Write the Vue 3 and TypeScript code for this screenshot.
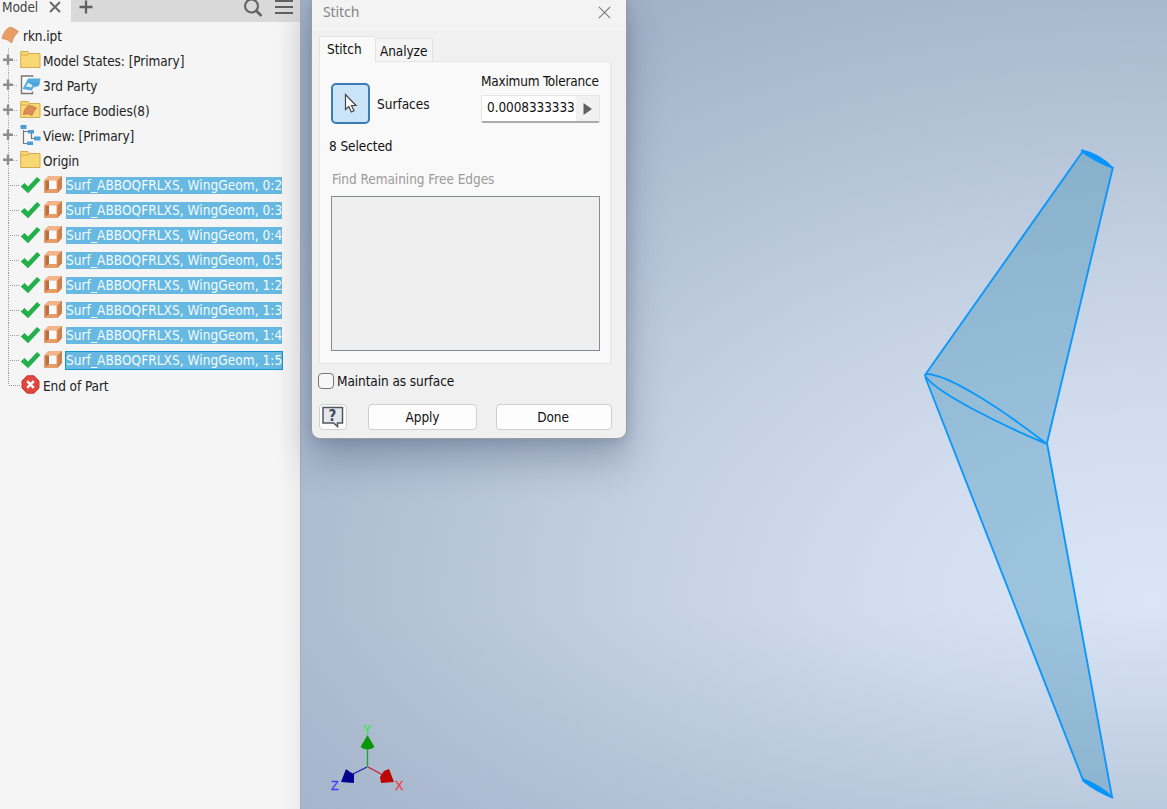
<script setup lang="ts">
interface TreeNode {
  label: string
  icon: 'folder' | 'party' | 'bodies' | 'view'
}

const nodes: TreeNode[] = [
  { label: 'Model States: [Primary]', icon: 'folder' },
  { label: '3rd Party', icon: 'party' },
  { label: 'Surface Bodies(8)', icon: 'bodies' },
  { label: 'View: [Primary]', icon: 'view' },
  { label: 'Origin', icon: 'folder' },
]

const surfaces: string[] = ['0:2', '0:3', '0:4', '0:5', '1:2', '1:3', '1:4', '1:5']
</script>

<template>
  <div class="app">
    <aside class="browser">
      <header class="tabs">
        <div class="tab">
          <span>Model</span>
          <svg width="12" height="12" viewBox="0 0 12 12"><path d="M1 1L11 11M11 1L1 11" stroke="#666" stroke-width="1.9" /></svg>
        </div>
        <svg class="plus" width="14" height="14" viewBox="0 0 14 14"><path d="M7 .5V13.500M.5 7H13.500" stroke="#606060" stroke-width="2.300" /></svg>
        <svg class="search" width="20" height="18" viewBox="0 0 20 18"><circle cx="8.500" cy="7" r="6.500" fill="none" stroke="#666" stroke-width="2.200" /><path d="M13 11.500L18.500 17" stroke="#666" stroke-width="2.600" /></svg>
        <svg class="burger" width="18" height="16" viewBox="0 0 18 16"><path d="M0 2H18M0 8H18M0 14H18" stroke="#606060" stroke-width="2" /></svg>
      </header>

      <div class="tree">
        <div class="row root">
          <svg width="18" height="18" viewBox="0 0 18 18"><path d="M9 1Q13 2 17.500 5.500Q12.500 10 10.500 17Q7 13 1 12.500Q3 4 9 1Z" fill="#e89d67" stroke="#d58a54" stroke-width=".8" /></svg>
          <span>rkn.ipt</span>
        </div>

        <div v-for="n in nodes" :key="n.label" class="row node">
          <svg class="expander" width="18" height="25" viewBox="0 0 18 25">
            <path d="M8.500 0V7M8.500 18V25M14 12.500H18" stroke="#aaa" stroke-dasharray="1 1" />
            <path d="M8 6.500V17M3 11.800H13" stroke="#8c8c8c" stroke-width="2.400" />
          </svg>
          <svg class="nicon" width="21" height="20" viewBox="0 0 21 20">
            <g v-if="n.icon === 'folder' || n.icon === 'bodies'">
              <path d="M.7 17.500V1.500H8L9.500 3.500H20V17.500Z" fill="#f8d775" stroke="#d6ac4a" />
              <path d="M1 5H8L9.500 3.500" fill="none" stroke="#d6ac4a" />
            </g>
            <path v-if="n.icon === 'bodies'" d="M9 5.500Q13 5.500 16.500 8Q13.500 10.500 12 15.500Q8 12.500 3.500 14.500Q4 8 9 5.500Z" fill="#dd8c58" stroke="#bd7040" stroke-width=".7" />
            <g v-if="n.icon === 'party'">
              <path d="M12.500 2V1H1.500V18.500H12.500V16.500" fill="#fafafa" stroke="#777" stroke-width="1.400" />
              <path d="M2.500 14L8 3.500H20.500L19 11L13 12.500L12 15.500Z" fill="#55abe2" />
              <path d="M5.500 11.500L8.500 7.500L12.500 10L11.500 12.500Z" fill="#d5ecfa" />
              <path d="M8.500 7L13 9.500L19.500 8" fill="none" stroke="#3c96d3" />
            </g>
            <g v-if="n.icon === 'view'">
              <path d="M3.500 5V18.500H7M3.500 6.500H8M11.500 8V13.500H14" fill="none" stroke="#777" stroke-width="1.200" />
              <path d="M.5 0h6v4h-6zM8 5h6v3.500h-6zM14 11.500h6.500v4h-6.500zM7 16.500h6v3.500h-6z" fill="#4b9dd7" />
            </g>
          </svg>
          <span>{{ n.label }}</span>
        </div>

        <div v-for="(s, i) in surfaces" :key="s" class="row surface">
          <svg width="20" height="25" viewBox="0 0 20 25"><path d="M8.500 0V25M10 12.500H20" stroke="#999" stroke-dasharray="1 1" /></svg>
          <svg class="check" width="21" height="18" viewBox="0 0 21 18"><path d="M.7 10.500L4.500 7L8 10.500L17 1L20.500 4L8 17.200Z" fill="#22b04b" /></svg>
          <svg class="cube" width="18" height="17" viewBox="0 0 18 17">
            <path d="M0 4.500L4.500 0H18V12L13.500 17H0Z" fill="#e69d68" />
            <path d="M0 4.500L4.500 0H18L13.500 4.500Z" fill="#f3b48a" />
            <path d="M13.500 4.500L18 0V12L13.500 17Z" fill="#d27e48" />
            <path d="M1.500 4.500H5V13L1.500 15.500Z" fill="#b87042" />
            <path d="M5 4.500H12.500V13H5Z" fill="#fafafa" />
          </svg>
          <span class="sel" :class="{ focused: i === surfaces.length - 1 }">Surf_ABBOQFRLXS, WingGeom, {{ s }}</span>
        </div>

        <div class="row end">
          <svg width="20" height="25" viewBox="0 0 20 25"><path d="M8.500 0V12M9 12.500H20" stroke="#999" stroke-dasharray="1 1" /></svg>
          <svg class="stop" width="19" height="19" viewBox="0 0 19 19"><path d="M6 .8H13L18 6V13L13 18.200H6L1 13V6Z" fill="#e2453f" stroke="#c93631" /><path d="M6.200 6.200L12.800 12.800M12.800 6.200L6.200 12.800" stroke="#fff" stroke-width="2.600" /></svg>
          <span>End of Part</span>
        </div>
      </div>
    </aside>

    <main class="viewport">
      <svg class="scene" width="866" height="809" viewBox="301 0 866 809">
        <path d="M1083 151L925 375L1083 780L1112 797L1047 443L1113 167Z" fill="#2d87b1" fill-opacity=".34" />
        <g fill="none" stroke="#0c98fb" stroke-width="1.900" stroke-linejoin="round">
          <path d="M1083 151L925 375L926 379L1083 780L1112 797L1047 443L1113 167" />
          <path d="M925 374C948 373 1004 411 1047 444C1006 427 938 394 926 377" />
        </g>
        <path d="M1082 150Q1101 155 1113 168Q1098 163 1082 152ZM1083 779Q1101 786 1113 798Q1097 792 1083 781Z" fill="#0795fd" stroke="#0795fd" stroke-width="1.500" />
        <g class="axes">
          <path d="M367.500 767V748" stroke="#16a92d" stroke-width="1.300" />
          <path d="M367 767L353 774" stroke="#2020b0" stroke-width="1.300" />
          <path d="M368 767L383 775" stroke="#c81e28" stroke-width="1.300" />
          <path d="M367.500 735L374.500 747Q367.500 752 360.500 747Z" fill="#079707" />
          <path d="M341 782L346 769L350 772L354 774L354 783Z" fill="#000091" />
          <path d="M394 782L381 783L380 777L384 771L389 769Z" fill="#bc0505" />
          <text x="363" y="734" fill="#36e948" stroke="#36e948">Y</text>
          <text x="331" y="790" fill="#3e43ed" stroke="#3e43ed">Z</text>
          <text x="395" y="790" fill="#ef3d46" stroke="#ef3d46">X</text>
        </g>
      </svg>

      <section class="dialog">
        <header class="title">
          <span>Stitch</span>
          <svg width="13" height="13" viewBox="0 0 13 13"><path d="M.8 .8L12.200 12.200M12.200 .8L.8 12.200" stroke="#777" stroke-width="1.100" /></svg>
        </header>
        <nav class="dtabs">
          <span class="dtab active">Stitch</span>
          <span class="dtab">Analyze</span>
        </nav>
        <div class="panel">
          <div class="controls">
            <button class="pick">
              <svg width="14" height="21" viewBox="0 0 14 21"><path d="M1.500 1.500V16.500L4.800 13.500L7.300 19L10 17.800L7.500 12.500H12Z" fill="#fff" stroke="#444" stroke-width="1.200" /></svg>
            </button>
            <span class="pick-label">Surfaces</span>
            <div class="tolerance">
              <span>Maximum Tolerance</span>
              <div class="field">
                <span class="value">0.0008333333</span>
                <span class="arrow"><svg width="9" height="12" viewBox="0 0 9 12"><path d="M.5 0L9 6L.5 12Z" fill="#606060" /></svg></span>
              </div>
            </div>
          </div>
          <div class="count">8 Selected</div>
          <div class="find">Find Remaining Free Edges</div>
          <div class="list"></div>
        </div>
        <label class="maintain"><i class="box"></i><span>Maintain as surface</span></label>
        <footer class="buttons">
          <button class="help">
            <svg width="22" height="22" viewBox="0 0 22 22">
              <path d="M1 1.500H20.500V17H15.500V20.500L11.500 17H1Z" fill="#e4e7ed" stroke="#50555f" stroke-width="1.500" />
              <text x="6.500" y="14.500">?</text>
            </svg>
          </button>
          <button class="apply">Apply</button>
          <button class="done">Done</button>
        </footer>
      </section>
    </main>
  </div>
</template>

<style>
body { margin: 0; overflow: hidden; }
</style>

<style scoped>
* { box-sizing: border-box; }
.app {
  width: 1167px; height: 809px; display: flex; overflow: hidden;
  font: 13.5px/17px "DejaVu Sans Condensed", "DejaVu Sans", sans-serif;
  font-stretch: condensed; letter-spacing: -.08px; color: #222; white-space: nowrap;
}
svg { display: block; flex: none; }
button { padding: 0; font: inherit; color: inherit; letter-spacing: inherit; }
.browser {
  width: 301px; height: 809px; flex: none; border-right: 1px solid #a9adb2;
  background: linear-gradient(90deg, #f5f5f5 0, #f5f5f5 280px, #ececec 300px);
}
.tabs { height: 22px; display: flex; background: #d9d9d9; color: #444; }
.tab { width: 71px; background: #f5f5f5; display: flex; padding: 0 9px 0 2px; justify-content: space-between; }
.tab span { height: 15px; line-height: 15px; }
.tab svg { margin: 1px 1px 0 0; }
.plus { margin: 0 0 0 8px; }
.search { margin: -1px 0 0 150px; }
.burger { margin: -1px 0 0 12px; }
.tree { padding-top: 1px; }
.row { height: 25px; display: flex; align-items: center; }
.row > span { padding-top: 1px; }
.root svg { margin: -2px 4px 0 1px; }
.expander { margin-right: 2px; }
.nicon { margin: -1px 2px 0 0; }
.check { margin-right: 3px; margin-top: -1px; }
.cube { margin-right: 4px; margin-top: -2px; }
.row > .sel {
  height: 17px; width: 216px; line-height: 17px; background: #67b9e1; color: #f5fbff;
  padding: 0; letter-spacing: .06px;
}
.sel.focused { outline: 1px solid #1595d4; }
.stop { margin: -2px 3px 0 1px; }
.viewport {
  position: relative; width: 866px; height: 809px;
  background:
    linear-gradient(180deg, rgba(158,175,199,0) 610px, rgba(158,175,199,.45) 840px),
    radial-gradient(ellipse 1020px 670px at 850px 600px, #dae5f7 0, #d2def0 25%, #c4d1e3 50%, #b3c1d5 75%, #a3b2c7 100%);
}
.scene { position: absolute; inset: 0; }
.axes text { font: 12.5px "Liberation Sans", Arial, sans-serif; stroke-width: .3px; letter-spacing: 0; }
.dialog {
  position: absolute; left: 10px; top: -8px; width: 316px; height: 447px; padding: 0 15px 0 7px;
  border-radius: 9px; background: #f0f0f0; border: 1px solid #969da9;
  box-shadow: 0 22px 36px rgba(30,45,70,.27), 0 3px 12px rgba(30,45,70,.14);
}
.title {
  height: 38px; margin: 0 -15px 0 -7px; padding: 10px 15px 0 11px; background: #f3f3f3;
  border-radius: 8px 8px 0 0; display: flex; justify-content: space-between; color: #858585;
  font: 14px/17px "Noto Sans", sans-serif; letter-spacing: -.1px;
}
.title svg { margin-top: 3px; }
.dtabs { height: 30px; display: flex; align-items: flex-end; color: #111; }
.dtab { width: 58px; height: 23px; border: 1px solid #e3e3e3; border-bottom: 0; background: #f4f4f4; padding: 4px 0 0 4px; line-height: 17px; }
.dtab.active { height: 26px; width: 56px; background: #f9f9f9; border-right: 0; padding: 4px 0 0 7px; z-index: 1; margin-bottom: -1px; }
.panel {
  width: 292px; height: 303px; padding: 11px 10px 0 11px; background: #f9f9f9; border: 1px solid #e5e5e5; color: #111;
}
.controls { display: flex; height: 50px; }
.pick { width: 39px; height: 41px; margin-top: 10px; border: 2px solid #397eb8; border-radius: 5px; background: #cce4f7; display: flex; align-items: center; justify-content: center; }
.pick-label { margin: 23px 0 0 7px; width: 104px; letter-spacing: 0; }
.tolerance { display: flex; flex-direction: column; letter-spacing: -.22px; }
.field { display: flex; width: 119px; height: 29px; margin-top: 5px; border: 1px solid #e5e5e5; border-bottom: 2px solid #aaa; border-radius: 2px; }
.value { width: 94px; background: #fff; padding: 3px 0 0 5px; letter-spacing: -.1px; }
.arrow { flex: 1; background: #f1f1f1; display: flex; align-items: center; justify-content: center; }
.count { margin: 15px 0 0 -2px; }
.find { margin: 16px 0 0 1px; color: #9a9a9a; letter-spacing: -.04px; }
.list { width: 269px; height: 155px; margin-top: 8px; border: 1px solid #858990; background: #efefef; }
.maintain { display: flex; height: 17px; margin-top: 9px; align-items: center; color: #111; }
.box { width: 16px; height: 16px; margin: -1px 3px 0 0; border: 1px solid #777; border-radius: 4px; background: #f7f7f7; }
.maintain .box { margin-left: -1px; }
.buttons { display: flex; margin-top: 14px; color: #111; }
.buttons button { height: 26px; flex: none; border: 1px solid #d0d0d0; border-radius: 4px; background: #fdfdfd; }
.buttons .help { width: 28px; display: flex; align-items: center; justify-content: center; }
.help text { font: bold 15px "DejaVu Sans Condensed", sans-serif; fill: #444a55; }
.buttons .apply, .buttons .done { padding-top: 1px; }
.buttons .apply { width: 109px; margin-left: 21px; }
.buttons .done { width: 116px; margin-left: 19px; padding-right: 2px; }
</style>
